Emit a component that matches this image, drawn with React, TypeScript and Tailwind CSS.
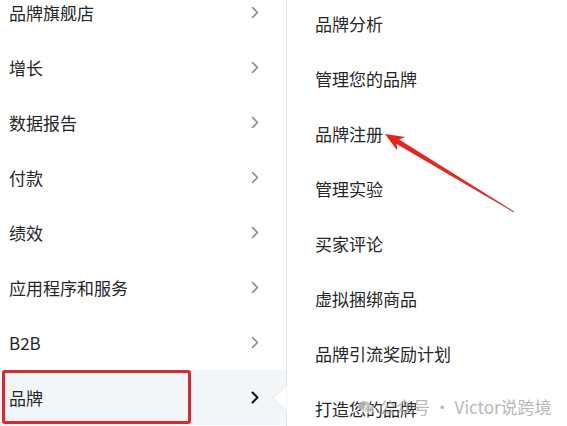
const leftItems = ["品牌旗舰店", "增长", "数据报告", "付款", "绩效", "应用程序和服务", "B2B", "品牌"];
const rightItems = ["品牌分析", "管理您的品牌", "品牌注册", "管理实验", "买家评论", "虚拟捆绑商品", "品牌引流奖励计划", "打造您的品牌"];

function Chevron({ active }: { active?: boolean }) {
  return (
    <svg width="8" height="13" viewBox="0 0 8 13" fill="none">
      <path
        d="M1.5 1.5 L6.5 6.5 L1.5 11.5"
        stroke={active ? "#111" : "#8c8c8c"}
        strokeWidth={active ? 2 : 1.6}
        strokeLinecap="round"
        strokeLinejoin="round"
      />
    </svg>
  );
}

export default function App() {
  return (
    <div className="relative flex h-[426px] w-[567px] overflow-hidden bg-white font-['Noto_Sans_CJK_SC','Noto_Sans',sans-serif] text-[17px] text-[#262626]">
      {/* main menu */}
      <div className="w-[287px] shrink-0 border-r border-[#e2e4e6]">
        <ul className="-mt-[15px]">
          {leftItems.map((label, i) => {
            const active = i === leftItems.length - 1;
            return (
              <li
                key={label}
                className={`relative flex h-[55px] items-center justify-between pl-[9px] pr-[27px] ${active ? "bg-[#f3f6f8]" : ""}`}
              >
                <span>{label}</span>
                <Chevron active={active} />
                {active && (
                  <>
                    <div className="absolute left-[2px] top-0 h-[54px] w-[189px] rounded-[3px] border-[3px] border-[#d42b2b]" />
                    <svg className="absolute -right-px top-[15px]" width="15" height="26" viewBox="0 0 15 26">
                      <path d="M15 0 L1 13 L15 26 Z" fill="#fff" stroke="#e6e8ea" strokeWidth="1" />
                    </svg>
                  </>
                )}
              </li>
            );
          })}
        </ul>
      </div>

      {/* submenu */}
      <div className="flex-1 pl-[28px]">
        <ul className="-mt-[4px]">
          {rightItems.map((label) => (
            <li key={label} className="flex h-[55px] items-center">
              {label}
            </li>
          ))}
        </ul>
      </div>

      {/* watermark */}
      <div className="pointer-events-none absolute left-[358px] top-[394px] flex items-center gap-[5px] text-[17px] text-[#a8a8a8] opacity-80">
        <svg width="16" height="14" viewBox="0 0 16 14">
          <ellipse cx="6" cy="6" rx="6" ry="5" fill="#b5b5b5" />
          <ellipse cx="11" cy="9" rx="5" ry="4" fill="#c8c8c8" stroke="#fff" strokeWidth="1" />
        </svg>
        <span>公众号 · Victor说跨境</span>
      </div>

      {/* annotation arrow */}
      <svg className="pointer-events-none absolute left-0 top-0" width="567" height="426" viewBox="0 0 567 426">
        <defs>
          <linearGradient id="arr" x1="385" y1="134" x2="514" y2="212" gradientUnits="userSpaceOnUse">
            <stop offset="0" stopColor="#e4231d" />
            <stop offset="0.75" stopColor="#d8312c" />
            <stop offset="1" stopColor="#a07070" />
          </linearGradient>
        </defs>
        <polygon
          points="385,134 397.2,150.6 396.6,143.9 513.7,212.5 514.3,211.5 399.1,139.6 405.4,136.9"
          fill="url(#arr)"
        />
      </svg>
    </div>
  );
}
